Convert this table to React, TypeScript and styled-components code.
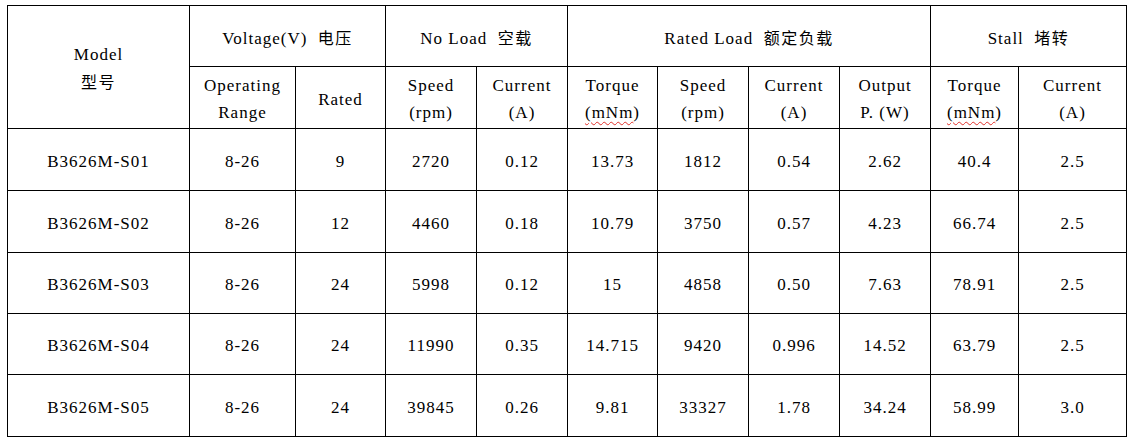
import React from "react";
import styled, { createGlobalStyle } from "styled-components";

const GlobalStyle = createGlobalStyle`
  html, body {
    margin: 0;
    padding: 0;
    background: #ffffff;
  }
  body {
    font-family: "Liberation Serif", "Times New Roman", "Noto Sans CJK SC", serif;
    color: #000000;
  }
`;

const Page = styled.div`
  padding: 5px 0 0 7px;
`;

const Grid = styled.div`
  display: grid;
  grid-template-columns: 181px 105px 89px 90px 90px 89px 90px 90px 90px 87px 107px;
  grid-template-rows: 60px 61px 61px 61px 60px 60px 61px;
  gap: 1px;
  padding: 1px;
  background: #000000;
  width: fit-content;
`;

const Cell = styled.div<{ $col?: number; $row?: number }>`
  grid-column: span ${(p) => p.$col ?? 1};
  grid-row: span ${(p) => p.$row ?? 1};
  background: #ffffff;
  display: flex;
  align-items: center;
  justify-content: center;
  padding-top: 3px;
  box-sizing: border-box;
`;

const Text = styled.span`
  display: block;
  text-align: center;
  font-family: "Liberation Serif", "Times New Roman", "Noto Sans CJK SC", serif;
  font-size: 17px;
  line-height: 27px;
  letter-spacing: 1px;
  white-space: pre;
  color: #000000;
`;

const Han = styled.span`
  font-family: "Noto Sans CJK SC", sans-serif;
  font-size: 16px;
  letter-spacing: 1.5px;
`;

const Misspelt = styled.span`
  text-decoration: underline wavy #e0302a;
  text-decoration-thickness: 1px;
  text-underline-offset: 3px;
`;

const rows: string[][] = [
  ["B3626M-S01", "8-26", "9", "2720", "0.12", "13.73", "1812", "0.54", "2.62", "40.4", "2.5"],
  ["B3626M-S02", "8-26", "12", "4460", "0.18", "10.79", "3750", "0.57", "4.23", "66.74", "2.5"],
  ["B3626M-S03", "8-26", "24", "5998", "0.12", "15", "4858", "0.50", "7.63", "78.91", "2.5"],
  ["B3626M-S04", "8-26", "24", "11990", "0.35", "14.715", "9420", "0.996", "14.52", "63.79", "2.5"],
  ["B3626M-S05", "8-26", "24", "39845", "0.26", "9.81", "33327", "1.78", "34.24", "58.99", "3.0"],
];

const Torque = () => (
  <Cell>
    <Text>
      {"Torque\n"}
      <Misspelt>(mNm</Misspelt>)
    </Text>
  </Cell>
);

const Plain = ({ children }: { children: React.ReactNode }) => (
  <Cell>
    <Text>{children}</Text>
  </Cell>
);

export default function App() {
  return (
    <>
      <GlobalStyle />
      <Page>
        <Grid>
          <Cell $row={2}>
            <Text>
              {"Model\n"}
              <Han>型号</Han>
            </Text>
          </Cell>
          <Cell $col={2}>
            <Text>
              {"Voltage(V)  "}
              <Han>电压</Han>
            </Text>
          </Cell>
          <Cell $col={2}>
            <Text>
              {"No Load  "}
              <Han>空载</Han>
            </Text>
          </Cell>
          <Cell $col={4}>
            <Text>
              {"Rated Load  "}
              <Han>额定负载</Han>
            </Text>
          </Cell>
          <Cell $col={2}>
            <Text>
              {"Stall  "}
              <Han>堵转</Han>
            </Text>
          </Cell>

          <Plain>{"Operating\nRange"}</Plain>
          <Plain>Rated</Plain>
          <Plain>{"Speed\n(rpm)"}</Plain>
          <Plain>{"Current\n(A)"}</Plain>
          <Torque />
          <Plain>{"Speed\n(rpm)"}</Plain>
          <Plain>{"Current\n(A)"}</Plain>
          <Plain>{"Output\nP. (W)"}</Plain>
          <Torque />
          <Plain>{"Current\n(A)"}</Plain>

          {rows.map((r) =>
            r.map((v, i) => <Plain key={r[0] + i}>{v}</Plain>)
          )}
        </Grid>
      </Page>
    </>
  );
}
